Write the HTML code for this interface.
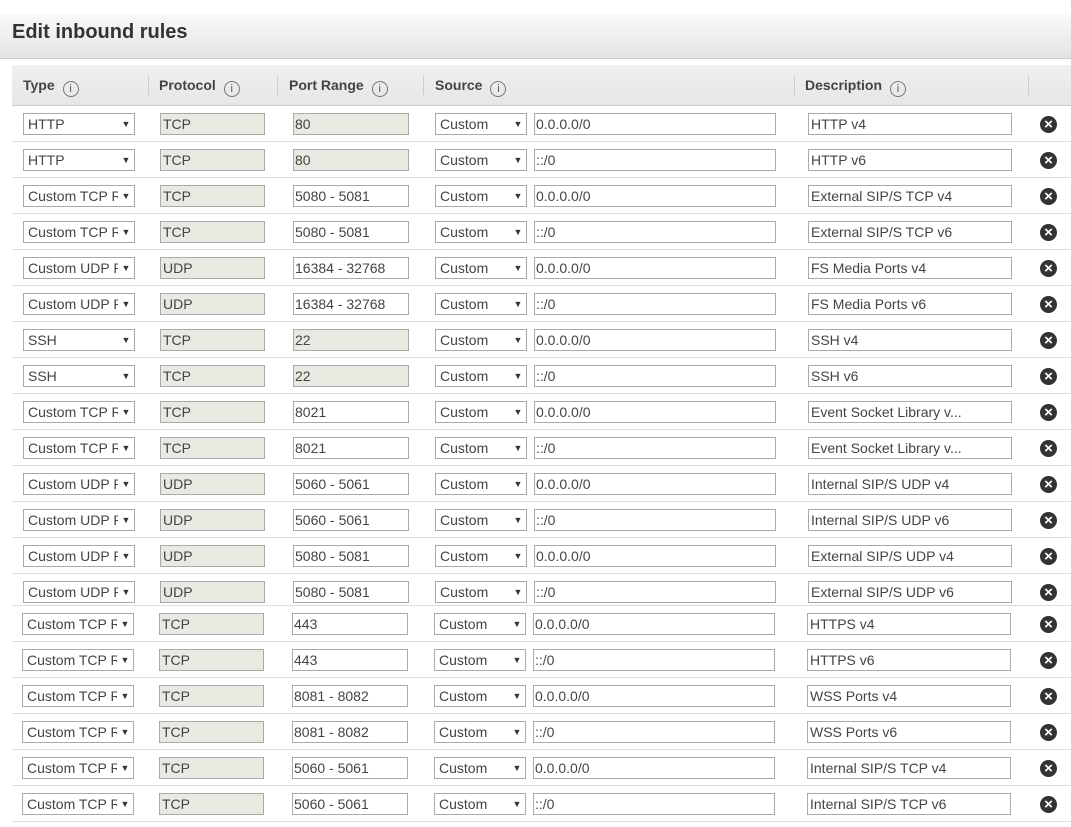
<!DOCTYPE html>
<html><head><meta charset="utf-8"><style>
*{box-sizing:border-box;margin:0;padding:0}
body{width:1071px;height:827px;background:#fff;font-family:"Liberation Sans",Arial,sans-serif;color:#444;position:relative;overflow:hidden}
.hb{position:absolute;left:0;top:13px;width:1071px;height:46px;background:linear-gradient(#fafafa,#e4e4e4);border-bottom:1px solid #ccc}
.hb h1{position:absolute;left:12px;top:8px;font-size:20px;font-weight:bold;color:#333}
.th{position:absolute;left:12px;top:65px;width:1059px;height:41px;background:linear-gradient(#f0f0f0,#e6e6e6);border-bottom:1px solid #ccc;font-size:14px;font-weight:bold;color:#444}
.th>span{position:absolute;top:12px}
.i{display:inline-block;width:16px;height:16px;border:1px solid #777;border-radius:50%;font-size:11px;font-weight:normal;font-style:normal;text-align:center;line-height:14px;margin-left:8px;vertical-align:-2px;color:#555}
.sep{position:absolute;top:11px;width:1px;height:19px;background:#ccc}
.r{position:absolute;left:12px;width:1059px;height:36px;border-bottom:1px solid #ddd}
.r>*{position:absolute;top:50%;margin-top:-11px;height:22px;font-size:14px;line-height:20px;padding-left:4px;border:1px solid #aaa;background:#fff;white-space:nowrap;overflow:hidden;color:#444}
.r .t{left:11px;width:112px}
.r .p{left:148px;width:105px;background:#e9e8e1;padding-left:2px}
.r .g{left:281px;width:116px;padding-left:1px}
.r .g.d{background:#e9e8e1}
.r .s{left:423px;width:92px}
.r .c{left:522px;width:242px;padding-left:1px}
.r .e{left:796px;width:204px;padding-left:2px}
.r .t:after,.r .s:after{content:"▼";position:absolute;right:0;top:0;width:16px;height:20px;font-size:9px;background:#fff;text-align:center;color:#333}
.r .x{left:1028px;width:17px;height:17px;margin-top:-8px;border:none;border-radius:50%;background:#333;padding:0;color:#fff;font-size:15px;font-weight:bold;line-height:17px;text-align:center}
.sh>*{transform:translateX(-1px)}
.sh .x{transform:none}
.r13>*{margin-top:-9px}
.r13 .x{margin-top:-6px}
</style></head><body>
<div class="hb"><h1>Edit inbound rules</h1></div>
<div class="th">
<span style="left:11px">Type<span class="i">i</span></span>
<div class="sep" style="left:136px"></div>
<span style="left:147px">Protocol<span class="i">i</span></span>
<div class="sep" style="left:265px"></div>
<span style="left:277px">Port Range<span class="i">i</span></span>
<div class="sep" style="left:411px"></div>
<span style="left:423px">Source<span class="i">i</span></span>
<div class="sep" style="left:782px"></div>
<span style="left:793px">Description<span class="i">i</span></span>
<div class="sep" style="left:1016px"></div>
</div>

<div class="r" style="top:106px"><div class="t">HTTP</div><div class="p">TCP</div><div class="g d">80</div><div class="s">Custom</div><div class="c">0.0.0.0/0</div><div class="e">HTTP v4</div><div class="x">×</div></div>
<div class="r" style="top:142px"><div class="t">HTTP</div><div class="p">TCP</div><div class="g d">80</div><div class="s">Custom</div><div class="c">::/0</div><div class="e">HTTP v6</div><div class="x">×</div></div>
<div class="r" style="top:178px"><div class="t">Custom TCP Rule</div><div class="p">TCP</div><div class="g">5080 - 5081</div><div class="s">Custom</div><div class="c">0.0.0.0/0</div><div class="e">External SIP/S TCP v4</div><div class="x">×</div></div>
<div class="r" style="top:214px"><div class="t">Custom TCP Rule</div><div class="p">TCP</div><div class="g">5080 - 5081</div><div class="s">Custom</div><div class="c">::/0</div><div class="e">External SIP/S TCP v6</div><div class="x">×</div></div>
<div class="r" style="top:250px"><div class="t">Custom UDP Rule</div><div class="p">UDP</div><div class="g">16384 - 32768</div><div class="s">Custom</div><div class="c">0.0.0.0/0</div><div class="e">FS Media Ports v4</div><div class="x">×</div></div>
<div class="r" style="top:286px"><div class="t">Custom UDP Rule</div><div class="p">UDP</div><div class="g">16384 - 32768</div><div class="s">Custom</div><div class="c">::/0</div><div class="e">FS Media Ports v6</div><div class="x">×</div></div>
<div class="r" style="top:322px"><div class="t">SSH</div><div class="p">TCP</div><div class="g d">22</div><div class="s">Custom</div><div class="c">0.0.0.0/0</div><div class="e">SSH v4</div><div class="x">×</div></div>
<div class="r" style="top:358px"><div class="t">SSH</div><div class="p">TCP</div><div class="g d">22</div><div class="s">Custom</div><div class="c">::/0</div><div class="e">SSH v6</div><div class="x">×</div></div>
<div class="r" style="top:394px"><div class="t">Custom TCP Rule</div><div class="p">TCP</div><div class="g">8021</div><div class="s">Custom</div><div class="c">0.0.0.0/0</div><div class="e">Event Socket Library v...</div><div class="x">×</div></div>
<div class="r" style="top:430px"><div class="t">Custom TCP Rule</div><div class="p">TCP</div><div class="g">8021</div><div class="s">Custom</div><div class="c">::/0</div><div class="e">Event Socket Library v...</div><div class="x">×</div></div>
<div class="r" style="top:466px"><div class="t">Custom UDP Rule</div><div class="p">UDP</div><div class="g">5060 - 5061</div><div class="s">Custom</div><div class="c">0.0.0.0/0</div><div class="e">Internal SIP/S UDP v4</div><div class="x">×</div></div>
<div class="r" style="top:502px"><div class="t">Custom UDP Rule</div><div class="p">UDP</div><div class="g">5060 - 5061</div><div class="s">Custom</div><div class="c">::/0</div><div class="e">Internal SIP/S UDP v6</div><div class="x">×</div></div>
<div class="r" style="top:538px"><div class="t">Custom UDP Rule</div><div class="p">UDP</div><div class="g">5080 - 5081</div><div class="s">Custom</div><div class="c">0.0.0.0/0</div><div class="e">External SIP/S UDP v4</div><div class="x">×</div></div>
<div class="r r13" style="top:574px;height:32px"><div class="t">Custom UDP Rule</div><div class="p">UDP</div><div class="g">5080 - 5081</div><div class="s">Custom</div><div class="c">::/0</div><div class="e">External SIP/S UDP v6</div><div class="x">×</div></div>
<div class="r sh" style="top:606px"><div class="t">Custom TCP Rule</div><div class="p">TCP</div><div class="g">443</div><div class="s">Custom</div><div class="c">0.0.0.0/0</div><div class="e">HTTPS v4</div><div class="x">×</div></div>
<div class="r sh" style="top:642px"><div class="t">Custom TCP Rule</div><div class="p">TCP</div><div class="g">443</div><div class="s">Custom</div><div class="c">::/0</div><div class="e">HTTPS v6</div><div class="x">×</div></div>
<div class="r sh" style="top:678px"><div class="t">Custom TCP Rule</div><div class="p">TCP</div><div class="g">8081 - 8082</div><div class="s">Custom</div><div class="c">0.0.0.0/0</div><div class="e">WSS Ports v4</div><div class="x">×</div></div>
<div class="r sh" style="top:714px"><div class="t">Custom TCP Rule</div><div class="p">TCP</div><div class="g">8081 - 8082</div><div class="s">Custom</div><div class="c">::/0</div><div class="e">WSS Ports v6</div><div class="x">×</div></div>
<div class="r sh" style="top:750px"><div class="t">Custom TCP Rule</div><div class="p">TCP</div><div class="g">5060 - 5061</div><div class="s">Custom</div><div class="c">0.0.0.0/0</div><div class="e">Internal SIP/S TCP v4</div><div class="x">×</div></div>
<div class="r sh" style="top:786px"><div class="t">Custom TCP Rule</div><div class="p">TCP</div><div class="g">5060 - 5061</div><div class="s">Custom</div><div class="c">::/0</div><div class="e">Internal SIP/S TCP v6</div><div class="x">×</div></div>
</body></html>
